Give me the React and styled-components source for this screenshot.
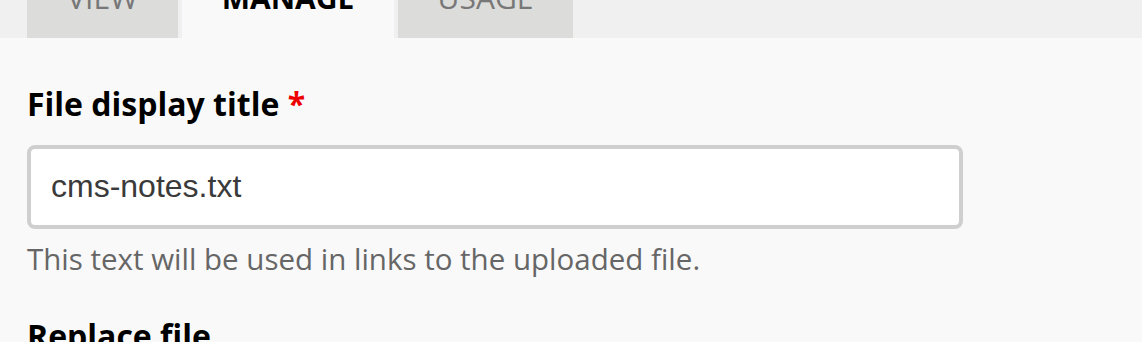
import React from "react";
import styled, { createGlobalStyle } from "styled-components";

const Global = createGlobalStyle`
  html, body { margin: 0; padding: 0; background: #f9f9f9; }
  body { font-family: "Open Sans", "Liberation Sans", sans-serif; overflow: hidden; }
`;

const Page = styled.div`
  width: 1142px;
  height: 342px;
  background: #f9f9f9;
  overflow: hidden;
`;

const TabBar = styled.div`
  display: flex;
  align-items: flex-end;
  gap: 4px;
  height: 38px;
  padding-left: 27px;
  background: #f0f0f0;
  overflow: hidden;
`;

const Tab = styled.div`
  box-sizing: border-box;
  width: ${(p) => p.$w}px;
  height: 60px;
  display: flex;
  align-items: flex-end;
  justify-content: center;
  padding-bottom: 25px;
  background: ${(p) => (p.$active ? "#f9f9f9" : "#dcdcda")};
  color: ${(p) => (p.$active ? "#000" : "#777")};
  font-size: 30px;
  font-weight: ${(p) => (p.$active ? 700 : 400)};
  line-height: 1;
  text-transform: uppercase;
`;

const Content = styled.div`
  padding: 46px 0 0 27px;
`;

const Label = styled.label`
  display: block;
  font-size: 32px;
  font-weight: 700;
  line-height: 40px;
  color: #000;
`;

const Required = styled.span`
  color: #e00;
`;

const Input = styled.input`
  display: block;
  box-sizing: border-box;
  margin-top: 21px;
  width: 936px;
  height: 84px;
  border: 4px solid #cfcfcf;
  border-radius: 8px;
  background: #fff;
  padding: 0 20px 2px;
  font-family: "Liberation Sans", Arial, sans-serif;
  font-size: 32px;
  color: #3a3a3a;
  outline: none;
`;

const Help = styled.div`
  margin-top: 10px;
  font-size: 29.5px;
  line-height: 40px;
  color: #666;
`;

const Heading = styled.div`
  margin-top: 37px;
  font-size: 32px;
  font-weight: 700;
  line-height: 40px;
  color: #000;
`;

export default function App() {
  return (
    <Page>
      <Global />
      <TabBar>
        <Tab $w={151}>View</Tab>
        <Tab $w={212} $active>Manage</Tab>
        <Tab $w={175}>Usage</Tab>
      </TabBar>
      <Content>
        <Label>
          File display title <Required>*</Required>
        </Label>
        <Input defaultValue="cms-notes.txt" />
        <Help>This text will be used in links to the uploaded file.</Help>
        <Heading>Replace file</Heading>
      </Content>
    </Page>
  );
}
